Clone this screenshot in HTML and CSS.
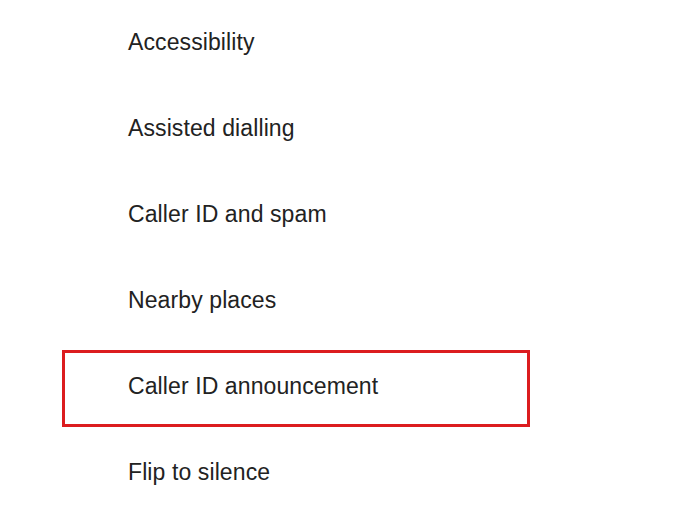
FILE: index.html
```html
<!DOCTYPE html>
<html lang="en">

<head>
    <meta charset="UTF-8">
    <meta name="viewport" content="width=device-width, initial-scale=1.0">
    <title>Call settings</title>
    <link rel="stylesheet" href="styles.css">
</head>

<body>

    <!-- Settings list -->
    <ul class="settings-list">
        <li class="settings-item">Accessibility</li>
        <li class="settings-item">Assisted dialling</li>
        <li class="settings-item">Caller ID and spam</li>
        <li class="settings-item">Nearby places</li>
        <li class="settings-item highlight">Caller ID announcement</li>
        <li class="settings-item">Flip to silence</li>
    </ul>

</body>

</html>
```

FILE: styles.css
```css
body {
    font-family: 'Liberation Sans', Arial, sans-serif;
    margin: 0;
    background-color: #fff;
    color: #222;
}

.settings-list {
    list-style: none;
    margin: 0;
    padding: 0 0 0 128px;
}

.settings-item {
    position: relative;
    height: 86px;
    line-height: 84px;
    font-size: 23px;
    letter-spacing: 0.1px;
}

/* Red annotation box round the picked row */
.highlight::after {
    content: '';
    position: absolute;
    left: -66px;
    top: 6px;
    width: 462px;
    height: 71px;
    border: 3px solid #dc1c1f;
}
```
